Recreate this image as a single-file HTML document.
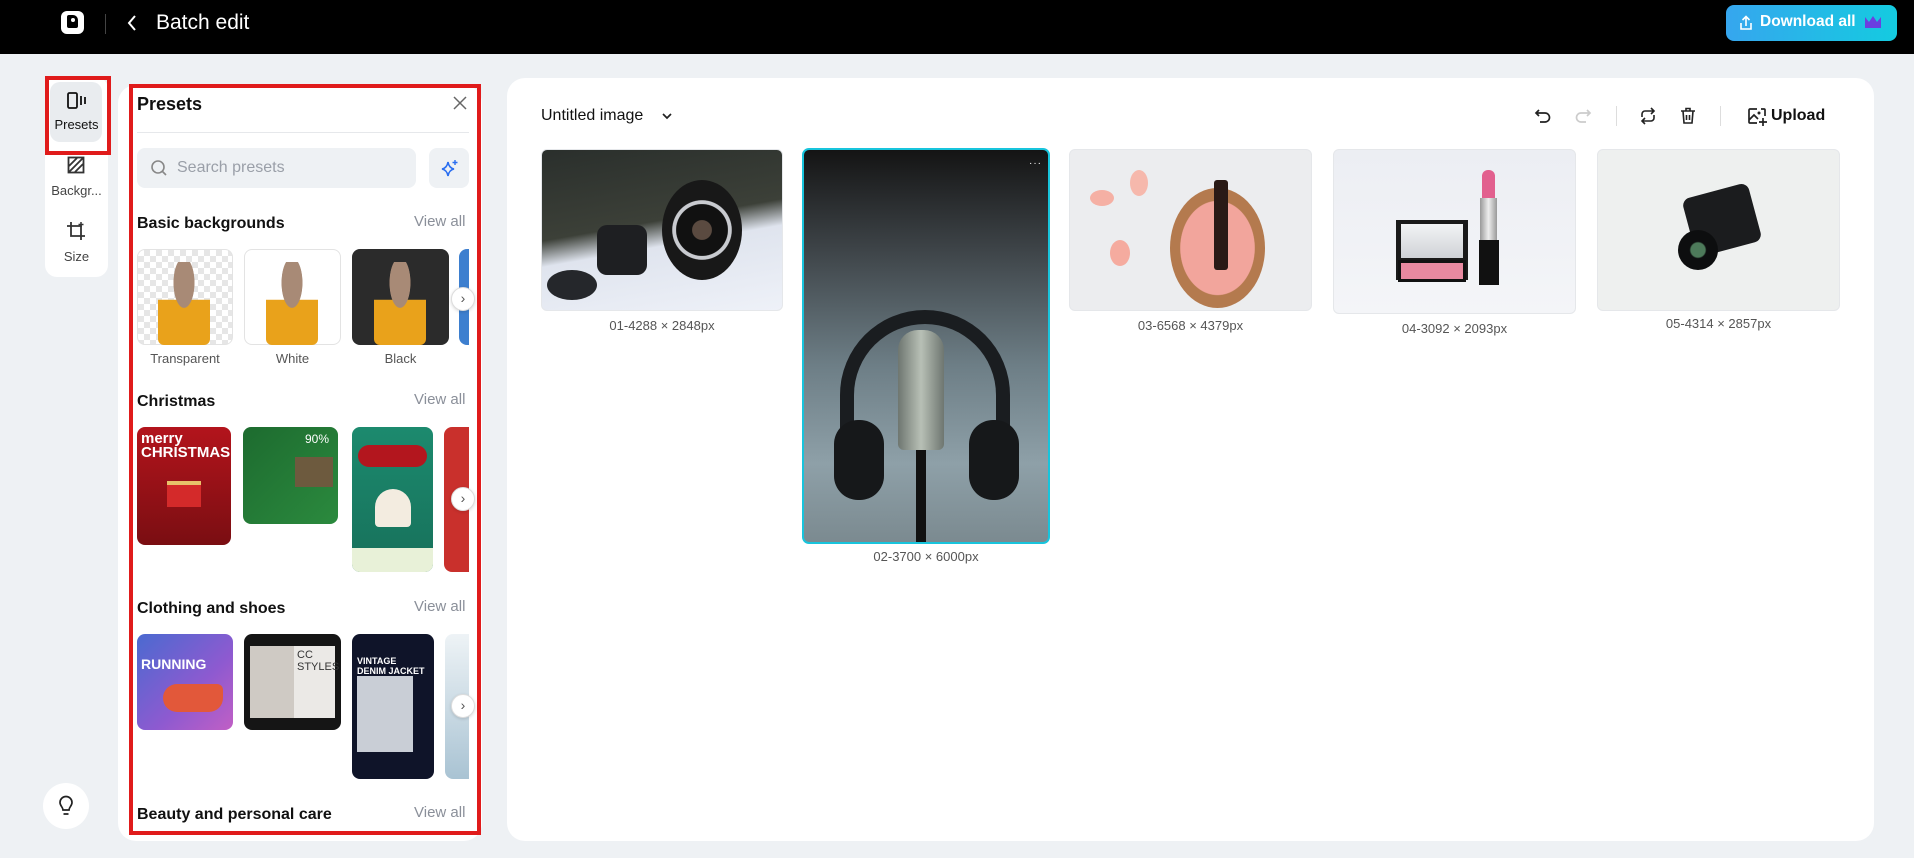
<!DOCTYPE html>
<html><head><meta charset="utf-8"><style>
*{box-sizing:border-box;margin:0;padding:0}
body{width:1914px;height:858px;overflow:hidden;background:#eef1f4;font-family:"Liberation Sans",sans-serif;position:relative;color:#111}
.a{position:absolute}
.hdr{left:0;top:0;width:1914px;height:54px;background:#000}
.card{background:#fff;border-radius:18px}
.lbl{font-size:13px;color:#555;text-align:center}
.sec{font-size:16px;font-weight:bold;color:#111}
.va{font-size:15px;color:#8a8f99}
.th{border-radius:8px;overflow:hidden}
.arrow{width:24px;height:24px;border-radius:50%;background:#fff;border:1px solid #ddd;box-shadow:0 1px 3px rgba(0,0,0,.15);font-size:14px;color:#555;text-align:center;line-height:21px}
.cap{font-size:13px;color:#555;text-align:center}
.img{border-radius:6px;overflow:hidden;border:1px solid #e5e7ea}
</style></head><body>
<div class="a hdr"></div>
<div class="a" style="left:61px;top:11px;width:23px;height:23px;background:#fff;border-radius:6px"></div>
<div class="a" style="left:67px;top:15px;width:11px;height:13px;background:#000;border-radius:2px 5px 2px 2px"></div>
<div class="a" style="left:71px;top:18px;width:4px;height:4px;background:#fff;border-radius:50%"></div>
<div class="a" style="left:105px;top:14px;width:1px;height:20px;background:#444"></div>
<svg class="a" style="left:125px;top:13px" width="14" height="20" viewBox="0 0 14 20"><path d="M10 3 L4 10 L10 17" stroke="#fff" stroke-width="2" fill="none"/></svg>
<div class="a" style="left:156px;top:11px;font-size:21px;color:#fff">Batch edit</div>
<div class="a" style="left:1726px;top:5px;width:171px;height:36px;border-radius:8px;background:linear-gradient(90deg,#36a6ee,#14cbe0)"></div>
<svg class="a" style="left:1738px;top:14px" width="16" height="18" viewBox="0 0 16 18"><path d="M8 12 V3 M4.5 6 L8 2.5 L11.5 6 M3 9 V15 H13 V9" stroke="#fff" stroke-width="1.6" fill="none"/></svg>
<div class="a" style="left:1760px;top:13px;font-size:15.5px;font-weight:bold;color:#fff">Download all</div>
<svg class="a" style="left:1864px;top:15px" width="18" height="14" viewBox="0 0 18 14"><path d="M1 2 L5 7 L9 1 L13 7 L17 2 V13 H1Z" fill="#6b3fe0"/></svg>

<!-- left rail -->
<div class="a card" style="left:45px;top:77px;width:63px;height:200px;border-radius:12px"></div>
<div class="a" style="left:50px;top:82px;width:52px;height:60px;background:#e9ecef;border-radius:10px"></div>
<div class="a" style="left:45px;top:76px;width:66px;height:79px;border:4px solid #e01b1b"></div>
<svg class="a" style="left:66px;top:91px" width="22" height="20" viewBox="0 0 22 20"><rect x="2" y="2" width="9" height="15" rx="1.5" stroke="#111" stroke-width="1.8" fill="none"/><path d="M15 5v9M19 6v7" stroke="#111" stroke-width="1.8"/></svg>
<div class="a" style="left:45px;top:117px;width:63px;font-size:13px;text-align:center">Presets</div>
<svg class="a" style="left:67px;top:156px" width="18" height="18" viewBox="0 0 18 18"><rect x="1.5" y="1.5" width="15" height="15" stroke="#333" stroke-width="1.8" fill="none"/><path d="M2 10 L10 2 M2 16 L16 2 M8 16 L16 8" stroke="#333" stroke-width="1.8"/></svg>
<div class="a" style="left:45px;top:183px;width:63px;font-size:13px;text-align:center;color:#444">Backgr...</div>
<svg class="a" style="left:66px;top:221px" width="20" height="20" viewBox="0 0 20 20"><path d="M5 1 V15 H19 M1 5 H15 V19" stroke="#333" stroke-width="1.8" fill="none"/><path d="M15 1v5M12.5 3.5h5" stroke="#333" stroke-width="1.5"/></svg>
<div class="a" style="left:45px;top:249px;width:63px;font-size:13px;text-align:center;color:#444">Size</div>
<div class="a" style="left:43px;top:783px;width:46px;height:46px;border-radius:50%;background:#fff"></div>
<svg class="a" style="left:56px;top:795px" width="20" height="22" viewBox="0 0 20 22"><path d="M7 15 C7 12 4 11 4 7.5 A6 6 0 0 1 16 7.5 C16 11 13 12 13 15Z M7.5 19 H12.5" stroke="#222" stroke-width="1.7" fill="none"/></svg>

<!-- presets panel -->
<div class="a card" style="left:118px;top:85px;width:364px;height:756px"></div>
<div class="a" style="left:129px;top:84px;width:352px;height:751px;border:4px solid #e01b1b"></div>
<div class="a" style="left:137px;top:94px;font-size:18px;font-weight:bold">Presets</div>
<svg class="a" style="left:452px;top:95px" width="16" height="16" viewBox="0 0 16 16"><path d="M2 2L14 14M14 2L2 14" stroke="#666" stroke-width="1.5"/></svg>
<div class="a" style="left:137px;top:132px;width:332px;height:1px;background:#e6e8eb"></div>
<div class="a" style="left:137px;top:148px;width:279px;height:40px;background:#eef1f4;border-radius:8px"></div>
<svg class="a" style="left:150px;top:159px" width="18" height="18" viewBox="0 0 18 18"><circle cx="8" cy="8" r="6" stroke="#888" stroke-width="1.6" fill="none"/><path d="M12.5 12.5L16 16" stroke="#888" stroke-width="1.6"/></svg>
<div class="a" style="left:177px;top:159px;font-size:16px;color:#9a9fa8">Search presets</div>
<div class="a" style="left:429px;top:148px;width:40px;height:40px;background:#eef1f4;border-radius:8px"></div>
<svg class="a" style="left:440px;top:158px" width="20" height="20" viewBox="0 0 20 20"><path d="M8 4 Q9 10 14 11 Q9 12 8 18 Q7 12 2 11 Q7 10 8 4Z" stroke="#2a6ef0" stroke-width="1.6" fill="none"/><path d="M15 2v5M12.5 4.5h5" stroke="#2a6ef0" stroke-width="1.4"/></svg>

<div class="a sec" style="left:137px;top:215px">Basic backgrounds</div>
<div class="a va" style="left:414px;top:213px">View all</div>
<div class="a th" style="left:137px;top:249px;width:96px;height:96px;border:1px solid #e3e3e3;background:repeating-conic-gradient(#e6e6e6 0 25%,#fff 0 50%) 0 0/12px 12px"></div>
<div class="a th" style="left:244px;top:249px;width:97px;height:96px;border:1px solid #e3e3e3;background:#fff"></div>
<div class="a th" style="left:352px;top:249px;width:97px;height:96px;background:#2b2b2b"></div>
<div class="a th" style="left:459px;top:249px;width:10px;height:96px;background:#3d7fcf;border-radius:8px 0 0 8px"></div>
<div class="a" style="left:158px;top:262px;width:52px;height:83px;background:radial-gradient(ellipse at 50% 25%,#a88a76 0 28%,transparent 29%),linear-gradient(#0000 45%,#e9a21b 46%);border-radius:20px 20px 6px 6px"></div>
<div class="a" style="left:266px;top:262px;width:52px;height:83px;background:radial-gradient(ellipse at 50% 25%,#a88a76 0 28%,transparent 29%),linear-gradient(#0000 45%,#e9a21b 46%);border-radius:20px 20px 6px 6px"></div>
<div class="a" style="left:374px;top:262px;width:52px;height:83px;background:radial-gradient(ellipse at 50% 25%,#a88a76 0 28%,transparent 29%),linear-gradient(#0000 45%,#e9a21b 46%);border-radius:20px 20px 6px 6px"></div>
<div class="a arrow" style="left:451px;top:287px">›</div>
<div class="a lbl" style="left:137px;top:351px;width:96px">Transparent</div>
<div class="a lbl" style="left:244px;top:351px;width:97px">White</div>
<div class="a lbl" style="left:352px;top:351px;width:97px">Black</div>

<div class="a sec" style="left:137px;top:393px">Christmas</div>
<div class="a va" style="left:414px;top:391px">View all</div>
<div class="a th" style="left:137px;top:427px;width:94px;height:118px;background:linear-gradient(#b3141c,#7a0e12);"><div style="color:#fff;font-weight:bold;font-size:15px;line-height:14px;padding:5px 4px">merry<br>CHRISTMAS</div><div style="margin:16px auto 0;width:34px;height:26px;background:#d42a2a;border-top:4px solid #e8c36a"></div></div>
<div class="a th" style="left:243px;top:427px;width:95px;height:97px;background:linear-gradient(135deg,#1d6b2f,#2b8a3e)"><div style="position:absolute;left:52px;top:30px;width:38px;height:30px;background:#6d5a3e"></div><div style="position:absolute;left:62px;top:5px;color:#fff;font-size:12px">90%</div></div>
<div class="a th" style="left:352px;top:427px;width:81px;height:145px;background:linear-gradient(#1c8a6e,#17705a)"><div style="margin:18px 6px 0;height:22px;border-radius:11px;background:#b3161e"></div><div style="margin:22px auto 0;width:36px;height:38px;border-radius:18px 18px 4px 4px;background:#f3ece0"></div><div style="position:absolute;left:0;bottom:0;width:100%;height:24px;background:#e8f1d8"></div></div>
<div class="a th" style="left:444px;top:427px;width:25px;height:145px;background:#c9302c;border-radius:8px 0 0 8px"></div>
<div class="a arrow" style="left:451px;top:487px">›</div>

<div class="a sec" style="left:137px;top:600px">Clothing and shoes</div>
<div class="a va" style="left:414px;top:598px">View all</div>
<div class="a th" style="left:137px;top:634px;width:96px;height:96px;background:linear-gradient(135deg,#4a6ad0,#8e5ad0 60%,#c15fc5)"><div style="color:#fff;font-weight:bold;font-size:14px;padding:22px 4px 0">RUNNING</div><div style="position:absolute;left:26px;top:50px;width:60px;height:28px;border-radius:14px 6px 14px 14px;background:#e2583a"></div></div>
<div class="a th" style="left:244px;top:634px;width:97px;height:96px;background:#151515"><div style="position:absolute;left:6px;top:12px;width:44px;height:72px;background:#cfcac4"></div><div style="position:absolute;left:50px;top:12px;width:41px;height:72px;background:#ebe9e6;font-size:11px;color:#333;padding:3px">CC<br>STYLES</div></div>
<div class="a th" style="left:352px;top:634px;width:82px;height:145px;background:#0f1429"><div style="color:#fff;font-weight:bold;font-size:9px;padding:22px 5px 0;line-height:10px">VINTAGE<br>DENIM JACKET</div><div style="position:absolute;left:5px;top:42px;width:56px;height:76px;background:#c9ced6"></div></div>
<div class="a th" style="left:445px;top:634px;width:24px;height:145px;background:linear-gradient(#eef3f6,#a9c3d3);border-radius:8px 0 0 8px"></div>
<div class="a arrow" style="left:451px;top:694px">›</div>

<div class="a sec" style="left:137px;top:806px">Beauty and personal care</div>
<div class="a va" style="left:414px;top:804px">View all</div>

<!-- main -->
<div class="a card" style="left:507px;top:78px;width:1367px;height:763px"></div>
<div class="a" style="left:541px;top:107px;font-size:16px;color:#111">Untitled image</div>
<svg class="a" style="left:660px;top:110px" width="14" height="12" viewBox="0 0 14 12"><path d="M3 4L7 8L11 4" stroke="#222" stroke-width="1.7" fill="none"/></svg>
<svg class="a" style="left:1534px;top:107px" width="18" height="18" viewBox="0 0 18 18"><path d="M5 3 L2 6 L5 9 M2 6 H11 A4.5 4.5 0 0 1 11 15 H6" stroke="#222" stroke-width="1.7" fill="none"/></svg>
<svg class="a" style="left:1574px;top:107px" width="18" height="18" viewBox="0 0 18 18"><path d="M13 3 L16 6 L13 9 M16 6 H7 A4.5 4.5 0 0 0 7 15 H12" stroke="#ccc" stroke-width="1.7" fill="none"/></svg>
<div class="a" style="left:1616px;top:106px;width:1px;height:20px;background:#ddd"></div>
<svg class="a" style="left:1638px;top:107px" width="20" height="18" viewBox="0 0 20 18"><path d="M4 10 V7 A3 3 0 0 1 7 4 H16 M13 1 L16 4 L13 7 M16 8 V11 A3 3 0 0 1 13 14 H4 M7 11 L4 14 L7 17" stroke="#222" stroke-width="1.6" fill="none"/></svg>
<svg class="a" style="left:1679px;top:106px" width="18" height="20" viewBox="0 0 18 20"><path d="M2 5 H16 M7 5 V2.5 H11 V5 M4 5 L5 17 H13 L14 5 M7.5 9 V14 M10.5 9 V14" stroke="#222" stroke-width="1.6" fill="none"/></svg>
<div class="a" style="left:1720px;top:106px;width:1px;height:20px;background:#ddd"></div>
<svg class="a" style="left:1747px;top:107px" width="20" height="20" viewBox="0 0 20 20"><path d="M10 2 H3 A1 1 0 0 0 2 3 V15 A1 1 0 0 0 3 16 H10 M2 13 L7 8 L11 12 M16 11 V19 M12 15 H20" stroke="#222" stroke-width="1.7" fill="none"/><circle cx="12" cy="6" r="1.5" fill="#222"/><path d="M14 2 H17 A1 1 0 0 1 18 3 V9" stroke="#222" stroke-width="1.7" fill="none"/></svg>
<div class="a" style="left:1771px;top:107px;font-size:16px;font-weight:bold;color:#111">Upload</div>

<div class="a img" style="left:541px;top:149px;width:242px;height:162px;background:linear-gradient(170deg,#2a2f2c 0%,#3c4038 45%,#dfe4ee 58%,#eef1f8 100%)">
 <div style="position:absolute;left:120px;top:30px;width:80px;height:100px;border-radius:50%;background:radial-gradient(circle,#5a4a40 0 15%,#111 16% 40%,#c9cbd0 41% 46%,#181818 47%)"></div>
 <div style="position:absolute;left:55px;top:75px;width:50px;height:50px;border-radius:10px;background:#1e1f22"></div>
 <div style="position:absolute;left:5px;top:120px;width:50px;height:30px;border-radius:50%;background:#25272b"></div>
</div>
<div class="a cap" style="left:541px;top:318px;width:242px">01-4288 × 2848px</div>

<div class="a" style="left:802px;top:148px;width:248px;height:396px;border:2px solid #18c4dc;border-radius:7px;overflow:hidden;background:linear-gradient(#141414 0%,#3d4347 25%,#6d7e86 55%,#8ea0a8 80%,#7b8a90 100%)">
 <div style="position:absolute;left:36px;top:160px;width:170px;height:180px;border:14px solid #1a1d20;border-bottom:none;border-radius:85px 85px 0 0"></div>
 <div style="position:absolute;left:94px;top:180px;width:46px;height:120px;border-radius:20px 20px 6px 6px;background:linear-gradient(90deg,#6e7670,#b8c0b6,#6e7670)"></div>
 <div style="position:absolute;left:30px;top:270px;width:50px;height:80px;border-radius:24px;background:#16181a"></div>
 <div style="position:absolute;left:165px;top:270px;width:50px;height:80px;border-radius:24px;background:#16181a"></div>
 <div style="position:absolute;left:112px;top:300px;width:10px;height:96px;background:#111"></div>
 <div style="position:absolute;right:6px;top:8px;color:#fff;font-size:10px;letter-spacing:1px">···</div>
</div>
<div class="a cap" style="left:802px;top:549px;width:248px">02-3700 × 6000px</div>

<div class="a img" style="left:1069px;top:149px;width:243px;height:162px;background:#ecedef">
 <div style="position:absolute;left:100px;top:38px;width:95px;height:120px;border-radius:50%;background:radial-gradient(#f2a59c 0 55%,#b47a4e 56%)"></div>
 <div style="position:absolute;left:144px;top:30px;width:14px;height:90px;border-radius:3px;background:#2a1a16"></div>
 <div style="position:absolute;left:20px;top:40px;width:24px;height:16px;border-radius:50%;background:#f5b0a4"></div>
 <div style="position:absolute;left:60px;top:20px;width:18px;height:26px;border-radius:50%;background:#f6b8ac"></div>
 <div style="position:absolute;left:40px;top:90px;width:20px;height:26px;border-radius:50%;background:#f5ab9f"></div>
</div>
<div class="a cap" style="left:1069px;top:318px;width:243px">03-6568 × 4379px</div>

<div class="a img" style="left:1333px;top:149px;width:243px;height:165px;background:linear-gradient(#eceef3,#f4f5f8)">
 <div style="position:absolute;left:62px;top:70px;width:72px;height:60px;background:#1a1a1a"></div>
 <div style="position:absolute;left:67px;top:74px;width:62px;height:34px;background:linear-gradient(#f2f3f5,#cfd2d6)"></div>
 <div style="position:absolute;left:64px;top:110px;width:68px;height:22px;background:#e889a0;border:3px solid #111"></div>
 <div style="position:absolute;left:148px;top:20px;width:13px;height:28px;border-radius:6px 6px 0 0;background:#e2608e"></div>
 <div style="position:absolute;left:146px;top:48px;width:17px;height:42px;background:linear-gradient(90deg,#999,#eee,#999)"></div>
 <div style="position:absolute;left:145px;top:90px;width:20px;height:45px;background:#111"></div>
</div>
<div class="a cap" style="left:1333px;top:321px;width:243px">04-3092 × 2093px</div>

<div class="a img" style="left:1597px;top:149px;width:243px;height:162px;background:#eef0ef">
 <div style="position:absolute;left:90px;top:40px;width:68px;height:60px;border-radius:8px;background:#1b1c1e;transform:rotate(-15deg)"></div>
 <div style="position:absolute;left:80px;top:80px;width:40px;height:40px;border-radius:50%;background:radial-gradient(#4d7a5a 0 25%,#0d0e0f 30%)"></div>
</div>
<div class="a cap" style="left:1597px;top:316px;width:243px">05-4314 × 2857px</div>
</body></html>
